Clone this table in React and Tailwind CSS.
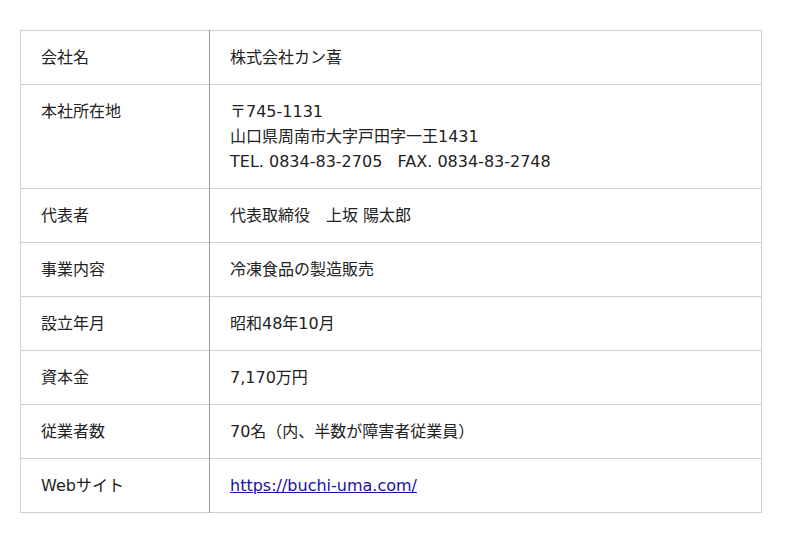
import React from 'react';

const rows = [
  { label: '会社名', value: ['株式会社カン喜'] },
  {
    label: '本社所在地',
    value: ['〒745-1131', '山口県周南市大字戸田字一王1431', 'TEL. 0834-83-2705   FAX. 0834-83-2748'],
  },
  { label: '代表者', value: ['代表取締役\u3000上坂 陽太郎'] },
  { label: '事業内容', value: ['冷凍食品の製造販売'] },
  { label: '設立年月', value: ['昭和48年10月'] },
  { label: '資本金', value: ['7,170万円'] },
  { label: '従業者数', value: ['70名（内、半数が障害者従業員）'] },
];

const App = () => {
  return (
    <div className="min-h-screen bg-white pt-[30px] pl-[20px] font-['DejaVu_Sans','Noto_Sans_CJK_JP',sans-serif] text-[16px] leading-[25px] text-[#222]">
      <table className="w-[742px] border-collapse">
        <tbody>
          {rows.map((r) => (
            <tr key={r.label} className="border border-[#d0d0d0]">
              <th className="w-[189px] border-r border-[#999] px-[20px] py-[14px] text-left align-top font-normal">
                {r.label}
              </th>
              <td className="px-[20px] py-[14px] align-top">
                {r.value.map((v) => (
                  <div key={v} className="whitespace-pre">{v}</div>
                ))}
              </td>
            </tr>
          ))}
          <tr className="border border-[#d0d0d0]">
            <th className="w-[189px] border-r border-[#999] px-[20px] py-[14px] text-left align-top font-normal">
              Webサイト
            </th>
            <td className="px-[20px] py-[14px] align-top">
              <a href="https://buchi-uma.com/" className="text-[#1a0dab] underline">https://buchi-uma.com/</a>
            </td>
          </tr>
        </tbody>
      </table>
    </div>
  );
};

export default App;
